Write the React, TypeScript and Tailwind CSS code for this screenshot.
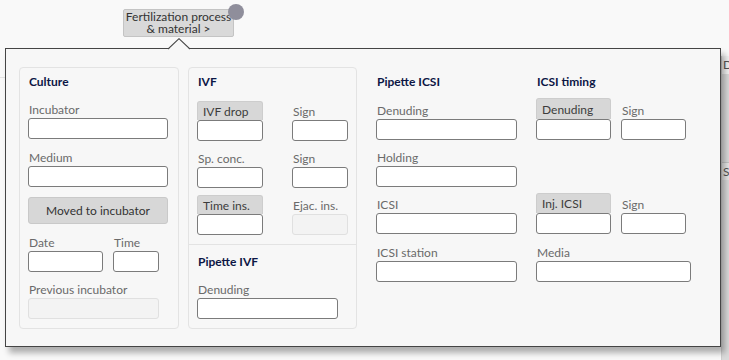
import React from "react";

const Label = ({ children, className = "" }: { children?: React.ReactNode; className?: string }) => (
  <div className={"h-4 pl-px text-[12px] leading-4 whitespace-nowrap text-[#6a6a6a] " + className}>{children}</div>
);

const Input = ({ w, disabled = false }: { w: string; disabled?: boolean }) => (
  <div
    className={
      "h-[21px] rounded-[3px] border " +
      (disabled ? "border-[#e0e0e0] bg-[#f3f3f3] " : "border-[#7b7b7b] bg-white ") +
      w
    }
  />
);

const Title = ({ children }: { children: React.ReactNode }) => (
  <div className="h-4 pl-px text-[12px] leading-4 font-bold text-[#0c1645]">{children}</div>
);

const GrayBox = ({ label, w, head }: { label: string; w: string; head: string }) => (
  <div className={"flex flex-col " + w}>
    <div
      className={
        "rounded-t-[3px] border-x border-t border-[#cdcdcd] bg-[#d7d7d7] px-[5px] text-[12px] text-[#3c3c3c] " + head
      }
    >
      {label}
    </div>
    <div className="h-[21px] rounded-[3px] border border-[#7b7b7b] bg-white" />
  </div>
);

export default function App() {
  return (
    <div className="relative h-[360px] w-[729px] overflow-hidden bg-[#f9f9f9] font-['Lato','Liberation_Sans',sans-serif]">
      {/* tab bar */}
      <div className="pt-[9px] pl-[123px]">
        <div className="relative flex h-[28px] w-[111px] flex-col items-center justify-center rounded-[2px] border border-[#c4c4c4] bg-[#d9d9d9] text-[12px] text-[#333]">
          <div className="h-[12px] leading-[12px]">Fertilization process</div>
          <div className="h-[12px] leading-[12px]">&amp; material &gt;</div>
          <div className="absolute -top-[6px] left-[104px] h-[16px] w-[16px] rounded-full bg-[#8f8e9b]" />
        </div>
      </div>

      {/* underlying page */}
      <div className="mt-[19px] flex h-[304px]">
        <div className="h-[22px] w-[5px] border-b border-[#e4e4e4]" />
        <div className="ml-auto flex w-[8px] flex-col overflow-hidden border-l border-[#cfcfcf]">
          <div className="h-[18px] bg-[#f2f2f2] pl-[1px] text-[12px] leading-[18px] whitespace-nowrap text-[#555]">Dt</div>
          <div className="h-[88px] bg-[#dadada]" />
          <div className="h-[18px] border-t border-[#c4c4c4] bg-[#e6e6e6] pl-[1px] text-[12px] leading-[18px] text-[#555]">S</div>
          <div className="flex-1 bg-[#dadada]" />
        </div>
      </div>

      {/* popup */}
      <div className="absolute top-[48px] left-[5px] h-[299px] w-[716px] border border-[#454545] bg-[#f7f7f7] pt-[18px] pl-[13px] shadow-[4px_6px_6px_rgba(0,0,0,0.3)]">
        <svg className="absolute -top-[11px] left-[162px]" width="22" height="12" viewBox="0 0 22 12">
          <path d="M0 11.5 L11 0.7 L22 11.5 Z" fill="#f7f7f7" />
          <path d="M0 11 L11 0.7 L22 11" fill="none" stroke="#454545" strokeWidth="1.1" />
        </svg>

        <div className="flex">
          {/* Culture */}
          <div className="h-[262px] w-[160px] rounded-[4px] border border-[#e3e3e3] pt-[6px] pl-[8px]">
            <Title>Culture</Title>
            <div className="mt-[12px]">
              <Label>Incubator</Label>
              <Input w="w-[140px]" />
            </div>
            <div className="mt-[11px]">
              <Label>Medium</Label>
              <Input w="w-[140px]" />
            </div>
            <div className="mt-[10px] flex h-[27px] w-[140px] items-center justify-center rounded-[3px] border border-[#c9c9c9] bg-[#d7d7d7] text-[12px] text-[#333]">
              Moved to incubator
            </div>
            <div className="mt-[11px] flex gap-[10px]">
              <div>
                <Label>Date</Label>
                <Input w="w-[75px]" />
              </div>
              <div>
                <Label>Time</Label>
                <Input w="w-[46px]" />
              </div>
            </div>
            <div className="mt-[10px]">
              <Label>Previous incubator</Label>
              <Input w="w-[131px]" disabled />
            </div>
          </div>

          {/* IVF */}
          <div className="ml-[9px] flex h-[262px] w-[169px] flex-col rounded-[4px] border border-[#e3e3e3]">
            <div className="border-b border-[#e3e3e3] px-[8px] pt-[6px] pb-[9px]">
              <Title>IVF</Title>
              <div className="mt-[11px] flex items-end">
                <GrayBox label="IVF drop" w="w-[66px]" head="h-[19px] leading-[19px]" />
                <div className="ml-[29px]">
                  <Label>Sign</Label>
                  <Input w="w-[56px]" />
                </div>
              </div>
              <div className="mt-[10px] flex items-end">
                <div>
                  <Label>Sp. conc.</Label>
                  <Input w="w-[66px]" />
                </div>
                <div className="ml-[29px]">
                  <Label>Sign</Label>
                  <Input w="w-[56px]" />
                </div>
              </div>
              <div className="mt-[7px] flex items-end">
                <GrayBox label="Time ins." w="w-[66px]" head="h-[19px] leading-[19px]" />
                <div className="ml-[29px]">
                  <Label>Ejac. ins.</Label>
                  <Input w="w-[56px]" disabled />
                </div>
              </div>
            </div>
            <div className="px-[8px] pt-[9px]">
              <Title>Pipette IVF</Title>
              <div className="mt-[12px]">
                <Label>Denuding</Label>
                <Input w="w-[141px]" />
              </div>
            </div>
          </div>

          {/* Pipette ICSI */}
          <div className="ml-[10px] h-[262px] w-[160px] border border-transparent pt-[6px] pl-[8px]">
            <Title>Pipette ICSI</Title>
            <div className="mt-[13px]">
              <Label>Denuding</Label>
              <Input w="w-[141px]" />
            </div>
            <div className="mt-[10px]">
              <Label>Holding</Label>
              <Input w="w-[141px]" />
            </div>
            <div className="mt-[10px]">
              <Label>ICSI</Label>
              <Input w="w-[141px]" />
            </div>
            <div className="mt-[11px]">
              <Label>ICSI station</Label>
              <Input w="w-[141px]" />
            </div>
          </div>

          {/* ICSI timing */}
          <div className="h-[262px] w-[170px] border border-transparent pt-[6px] pl-[8px]">
            <Title>ICSI timing</Title>
            <div className="mt-[8px] flex items-end">
              <GrayBox label="Denuding" w="w-[75px]" head="h-[21px] leading-[21px]" />
              <div className="ml-[10px]">
                <Label>Sign</Label>
                <Input w="w-[65px]" />
              </div>
            </div>
            <div className="mt-[53px] flex items-end">
              <GrayBox label="Inj. ICSI" w="w-[75px]" head="h-[20px] leading-[20px]" />
              <div className="ml-[10px]">
                <Label>Sign</Label>
                <Input w="w-[65px]" />
              </div>
            </div>
            <div className="mt-[11px]">
              <Label>Media</Label>
              <Input w="w-[155px]" />
            </div>
          </div>
        </div>
      </div>
    </div>
  );
}
